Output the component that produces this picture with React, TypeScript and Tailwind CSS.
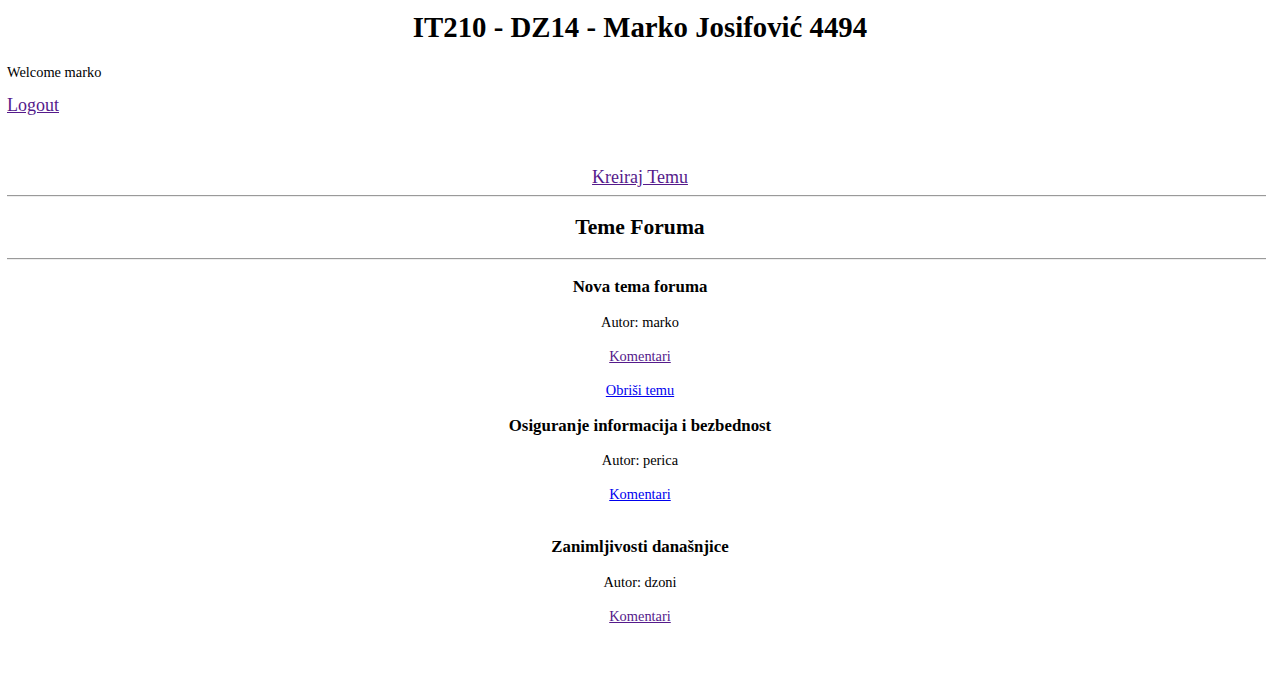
const visited = "text-[#551a8b] underline";
const fresh = "text-[#0000ee] underline";

interface Topic {
  title: string;
  author: string;
  commentsVisited: boolean;
  canDelete: boolean;
  gap: string;
  authorGap: string;
}

const topics: Topic[] = [
  { title: "Nova tema foruma", author: "marko", commentsVisited: true, canDelete: true, gap: "mt-[16px]", authorGap: "mt-[14px]" },
  { title: "Osiguranje informacija i bezbednost", author: "perica", commentsVisited: false, canDelete: false, gap: "mt-[15px]", authorGap: "mt-[13px]" },
  { title: "Zanimljivosti današnjice", author: "dzoni", commentsVisited: true, canDelete: false, gap: "mt-[32px]", authorGap: "mt-[14px]" },
];

const Rule = ({ className = "" }: { className?: string }) => (
  <div className={`h-[2px] border-t border-t-[#9a9a9a] border-b border-b-[#eeeeee] ${className}`} />
);

const TopicItem = ({ topic }: { topic: Topic }) => (
  <div className={`flex flex-col items-center ${topic.gap}`}>
    <h3 className="h-[22px] leading-[22px] text-[16.85px] font-bold">{topic.title}</h3>
    <p className={`${topic.authorGap} h-[20px] leading-[20px] text-[14.4px]`}>Autor: {topic.author}</p>
    <a href="#" className={`mt-[14px] h-[20px] leading-[20px] text-[14.4px] ${topic.commentsVisited ? visited : fresh}`}>
      Komentari
    </a>
    {topic.canDelete && (
      <a href="#" className={`mt-[14px] h-[20px] leading-[20px] text-[14.4px] ${fresh}`}>
        Obriši temu
      </a>
    )}
  </div>
);

export default function App() {
  return (
    <div className="w-full h-[673px] overflow-hidden bg-white text-black font-['Liberation_Serif','Times_New_Roman',serif]">
      <div className="ml-[7px] w-[1266px] pt-[10px] flex flex-col">
        <h1 className="h-[34px] leading-[34px] text-center text-[28.8px] font-bold">
          IT210 - DZ14 - Marko Josifović 4494
        </h1>
        <p className="mt-[18px] h-[20px] leading-[20px] text-[14.4px]">Welcome marko</p>
        <div className="mt-[12px] h-[22px] leading-[22px] text-[18px]">
          <a href="#" className={visited}>Logout</a>
        </div>

        <div className="mt-[50px] h-[22px] leading-[22px] text-[18px] text-center">
          <a href="#" className={visited}>Kreiraj Temu</a>
        </div>
        <Rule className="mt-[7px]" />
        <h2 className="mt-[17px] h-[26px] leading-[26px] text-center text-[21.6px] font-bold">Teme Foruma</h2>
        <Rule className="mt-[18px]" />

        {topics.map((t) => (
          <TopicItem key={t.title} topic={t} />
        ))}
      </div>
    </div>
  );
}
